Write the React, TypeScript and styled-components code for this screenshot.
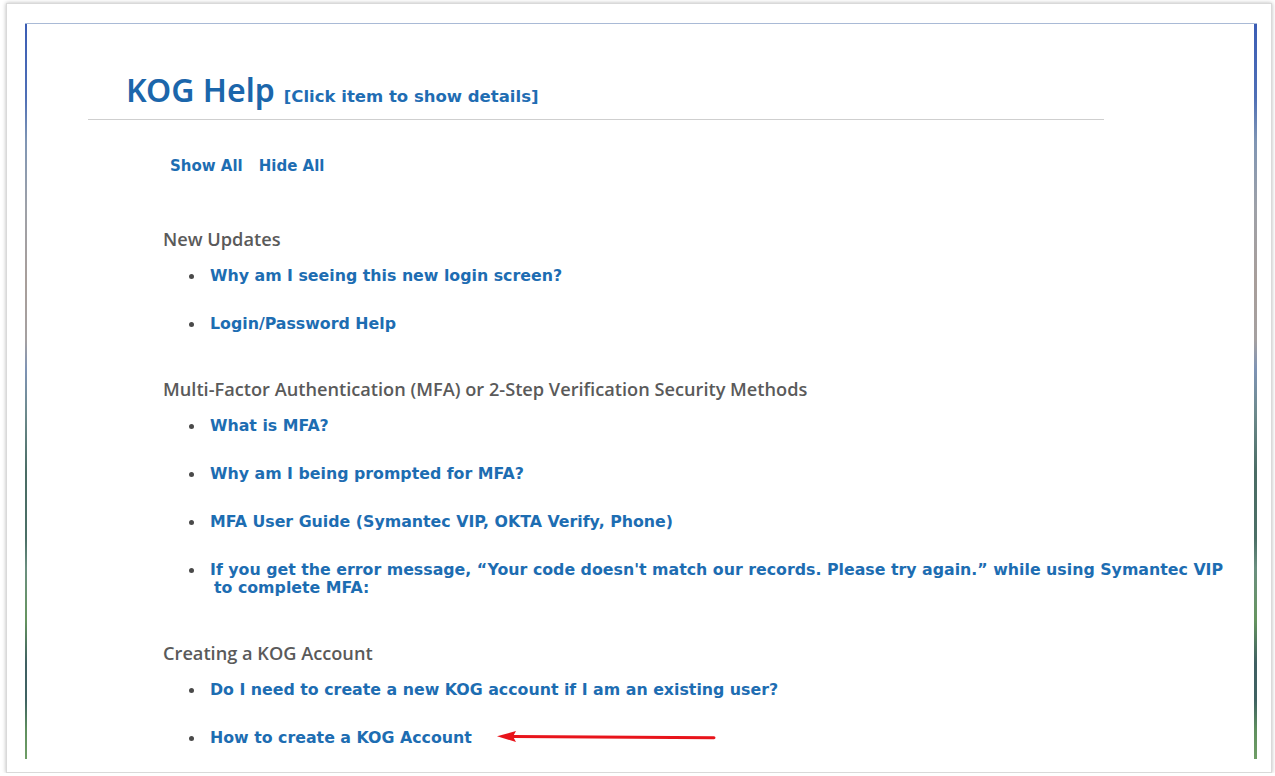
import React from "react";
import styled, { createGlobalStyle } from "styled-components";

const GlobalStyle = createGlobalStyle`
  html, body {
    margin: 0;
    padding: 0;
    background: #ffffff;
  }
  body {
    font-family: "DejaVu Sans", "Noto Sans", sans-serif;
  }
`;

const Frame = styled.div`
  box-sizing: border-box;
  width: 1266px;
  height: 770px;
  margin: 3px 0 0 6px;
  border: 1px solid #d9d9d9;
  box-shadow: 0 0 4px rgba(0, 0, 0, 0.28);
  padding: 19px 0 0 18px;
  background: #fff;
`;

/* the side rules of the panel fade from blue through grey into teal and green */
const edgeGradient = `linear-gradient(
  to bottom,
  #3b5db5 0%,
  #4f6fb6 10%,
  #8096b4 16%,
  #9ea1a8 25%,
  #a89e9a 35%,
  #a5a0a0 43%,
  #7e93b5 47%,
  #6d8a8c 53%,
  #4a6c64 61%,
  #4b6f66 70%,
  #6b8f80 74%,
  #66955f 81%,
  #3f5f62 87%,
  #3f6262 92%,
  #5f8f5e 96%,
  #6f9e66 100%
)`;

const Panel = styled.div`
  box-sizing: border-box;
  width: 1232px;
  height: 736px;
  border-top: 1px solid #a9bad6;
  background-image: ${edgeGradient}, ${edgeGradient};
  background-size: 2px 100%, 3px 100%;
  background-position: left top, right top;
  background-repeat: no-repeat;
  padding: 0 0 0 63px;
`;

const Header = styled.header`
  box-sizing: border-box;
  width: 1016px;
  border-bottom: 1px solid #cfcfcf;
  padding: 47px 0 10px 38px;
  display: flex;
  align-items: baseline;
  gap: 9px;
`;

const Title = styled.h1`
  margin: 0;
  font-family: "Noto Sans", sans-serif;
  font-size: 32px;
  font-weight: 600;
  color: #1b66ab;
  line-height: 38px;
`;

const Hint = styled.span`
  font-size: 16.5px;
  font-weight: 700;
  color: #1f6db3;
`;

const Body = styled.div`
  padding: 37px 0 0 75px;
`;

const Toggles = styled.div`
  display: flex;
  gap: 16px;
  padding-left: 7px;
  margin-bottom: 54px;
`;

const LinkText = styled.a<{ $size?: number }>`
  font-size: ${(p) => p.$size ?? 15.8}px;
  font-weight: 700;
  color: #1d6db2;
  text-decoration: none;
  cursor: pointer;
  line-height: 18px;
`;

const Section = styled.section`
  margin-bottom: 46px;
`;

const SectionTitle = styled.h2`
  margin: 0 0 18px;
  font-family: "Open Sans", sans-serif;
  font-size: 18.2px;
  font-weight: 600;
  color: #5a5a5a;
  line-height: 20px;
`;

const List = styled.ul`
  margin: 0;
  padding: 0 0 0 26px;
  list-style: none;
  display: flex;
  flex-direction: column;
  gap: 30px;
`;

const Item = styled.li`
  display: flex;
  align-items: flex-start;
  gap: 16px;
  line-height: 18px;
`;

const Bullet = styled.span`
  flex: none;
  width: 5px;
  height: 5px;
  margin-top: 7px;
  border-radius: 50%;
  background: #4a4a4a;
`;

/* long entries wrap with their second line set in slightly */
const ItemLink = styled(LinkText)`
  display: block;
  max-width: 1016px;
  padding-left: 4px;
  text-indent: -4px;
`;

const Pointer = styled.svg`
  flex: none;
  margin-left: 9px;
  margin-top: 1px;
`;

type Entry = { text: string; marked?: boolean };

const sections: { title: string; items: Entry[] }[] = [
  {
    title: "New Updates",
    items: [
      { text: "Why am I seeing this new login screen?" },
      { text: "Login/Password Help" },
    ],
  },
  {
    title:
      "Multi-Factor Authentication (MFA) or 2-Step Verification Security Methods",
    items: [
      { text: "What is MFA?" },
      { text: "Why am I being prompted for MFA?" },
      { text: "MFA User Guide (Symantec VIP, OKTA Verify, Phone)" },
      {
        text: "If you get the error message, \u201cYour code doesn't match our records. Please try again.\u201d while using Symantec VIP to complete MFA:",
      },
    ],
  },
  {
    title: "Creating a KOG Account",
    items: [
      { text: "Do I need to create a new KOG account if I am an existing user?" },
      { text: "How to create a KOG Account", marked: true },
    ],
  },
];

export default function App() {
  return (
    <>
      <GlobalStyle />
      <Frame>
        <Panel>
          <Header>
            <Title>KOG Help</Title>
            <Hint>[Click item to show details]</Hint>
          </Header>
          <Body>
            <Toggles>
              <LinkText $size={15}>Show All</LinkText>
              <LinkText $size={15}>Hide All</LinkText>
            </Toggles>
            {sections.map((s) => (
              <Section key={s.title}>
                <SectionTitle>{s.title}</SectionTitle>
                <List>
                  {s.items.map((it) => (
                    <Item key={it.text}>
                      <Bullet />
                      <ItemLink>{it.text}</ItemLink>
                      {it.marked && (
                        <Pointer width="220" height="14" viewBox="0 0 220 14">
                          <path
                            d="M16 6.5 L217 7.8"
                            stroke="#e8141b"
                            strokeWidth="3"
                            strokeLinecap="round"
                            fill="none"
                          />
                          <path d="M0 6.3 L19 1 L16 6.5 L19 12 Z" fill="#e8141b" />
                        </Pointer>
                      )}
                    </Item>
                  ))}
                </List>
              </Section>
            ))}
          </Body>
        </Panel>
      </Frame>
    </>
  );
}
